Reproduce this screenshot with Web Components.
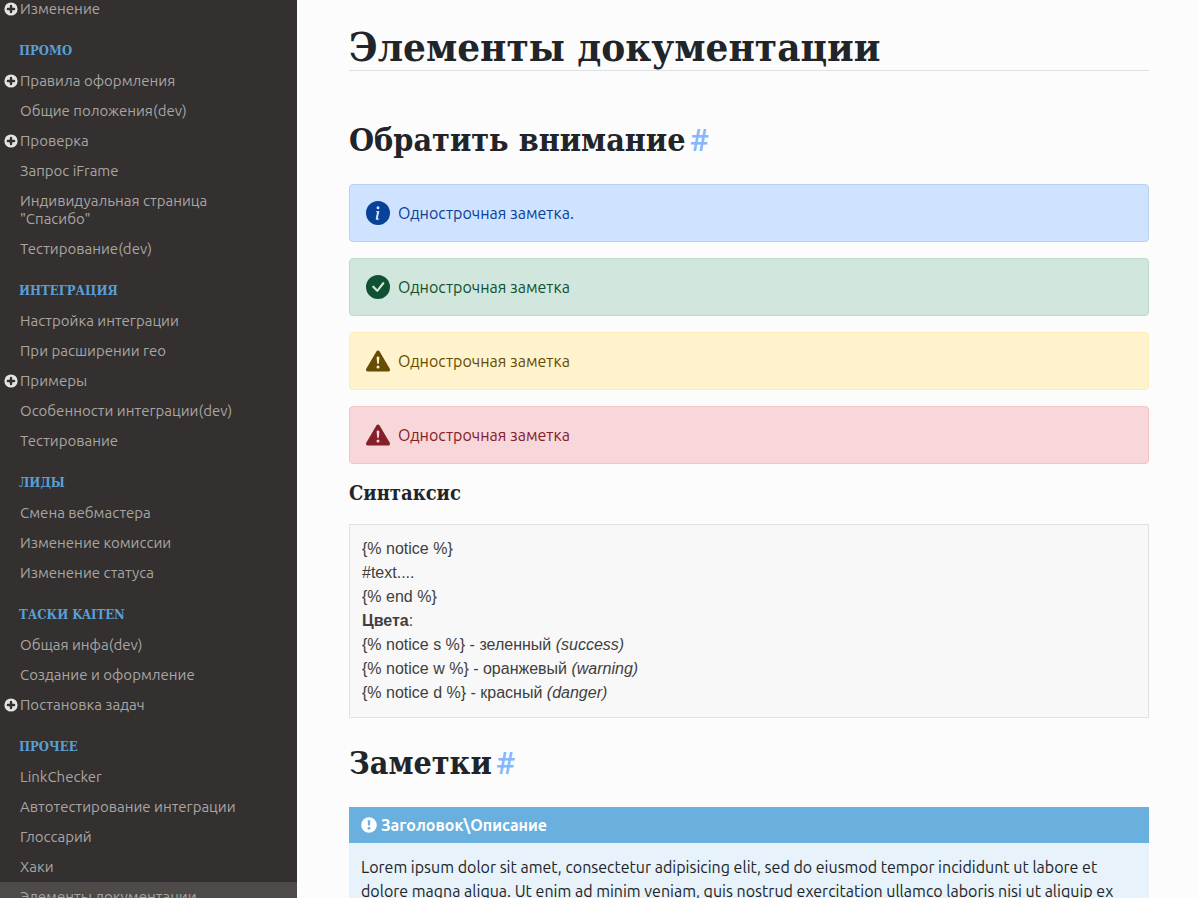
<!DOCTYPE html>
<html lang="ru">
<head>
<meta charset="utf-8">
<meta name="viewport" content="width=device-width, initial-scale=1">
<title>Элементы документации</title>
<style>
  :root {
    --sans: Ubuntu, "Noto Sans", sans-serif;
    --slab: "Roboto Slab", "DejaVu Serif Condensed", "DejaVu Serif", serif;
  }
  body { margin: 0; background: #fcfcfc; color: #212529; font: 16px/24px var(--sans); }
</style>
</head>
<body>
<docs-layout>
  <docs-sidebar slot="sidebar">
    <nav-item expandable>Изменение</nav-item>
    <nav-group heading="ПРОМО">
      <nav-item expandable>Правила оформления</nav-item>
      <nav-item>Общие положения(dev)</nav-item>
      <nav-item expandable>Проверка</nav-item>
      <nav-item>Запрос iFrame</nav-item>
      <nav-item>Индивидуальная страница "Спасибо"</nav-item>
      <nav-item>Тестирование(dev)</nav-item>
    </nav-group>
    <nav-group heading="ИНТЕГРАЦИЯ">
      <nav-item>Настройка интеграции</nav-item>
      <nav-item>При расширении гео</nav-item>
      <nav-item expandable>Примеры</nav-item>
      <nav-item>Особенности интеграции(dev)</nav-item>
      <nav-item>Тестирование</nav-item>
    </nav-group>
    <nav-group heading="ЛИДЫ">
      <nav-item>Смена вебмастера</nav-item>
      <nav-item>Изменение комиссии</nav-item>
      <nav-item>Изменение статуса</nav-item>
    </nav-group>
    <nav-group heading="ТАСКИ KAITEN">
      <nav-item>Общая инфа(dev)</nav-item>
      <nav-item>Создание и оформление</nav-item>
      <nav-item expandable>Постановка задач</nav-item>
    </nav-group>
    <nav-group heading="ПРОЧЕЕ">
      <nav-item>LinkChecker</nav-item>
      <nav-item>Автотестирование интеграции</nav-item>
      <nav-item>Глоссарий</nav-item>
      <nav-item>Хаки</nav-item>
      <nav-item active>Элементы документации</nav-item>
    </nav-group>
  </docs-sidebar>

  <page-title>Элементы документации</page-title>
  <section-title anchor="notice">Обратить внимание</section-title>
  <doc-notice>Однострочная заметка.</doc-notice>
  <doc-notice kind="success">Однострочная заметка</doc-notice>
  <doc-notice kind="warning">Однострочная заметка</doc-notice>
  <doc-notice kind="danger">Однострочная заметка</doc-notice>
  <sub-title>Синтаксис</sub-title>
  <syntax-box>
    <div>{% notice %}</div>
    <div>#text....</div>
    <div>{% end %}</div>
    <div><b>Цвета</b>:</div>
    <div>{% notice s %} - зеленный <i>(success)</i></div>
    <div>{% notice w %} - оранжевый <i>(warning)</i></div>
    <div>{% notice d %} - красный <i>(danger)</i></div>
  </syntax-box>
  <section-title anchor="notes">Заметки</section-title>
  <note-card heading="Заголовок\Описание">Lorem ipsum dolor sit amet, consectetur adipisicing elit, sed do eiusmod tempor incididunt ut labore et dolore magna aliqua. Ut enim ad minim veniam, quis nostrud exercitation ullamco laboris nisi ut aliquip ex ea commodo consequat.</note-card>
</docs-layout>

<script>
  const icons = {
    info: 'M8 16A8 8 0 1 0 8 0a8 8 0 0 0 0 16zm.93-9.412-1 4.705c-.07.34.029.533.304.533.194 0 .487-.07.686-.246l-.088.416c-.287.346-.92.598-1.465.598-.703 0-1.002-.422-.808-1.319l.738-3.468c.064-.293.006-.399-.287-.47l-.451-.081.082-.381 2.29-.287zM8 5.5a1 1 0 1 1 0-2 1 1 0 0 1 0 2z',
    success: 'M16 8A8 8 0 1 1 0 8a8 8 0 0 1 16 0zm-3.97-3.03a.75.75 0 0 0-1.08.022L7.477 9.417 5.384 7.323a.75.75 0 0 0-1.06 1.06L6.97 11.03a.75.75 0 0 0 1.079-.02l3.992-4.99a.75.75 0 0 0-.01-1.05z',
    warning: 'M8.982 1.566a1.13 1.13 0 0 0-1.96 0L.165 13.233c-.457.778.091 1.767.98 1.767h13.713c.889 0 1.438-.99.98-1.767L8.982 1.566zM8 5c.535 0 .954.462.9.995l-.35 3.507a.552.552 0 0 1-1.1 0L7.1 5.995A.905.905 0 0 1 8 5zm.002 6a1 1 0 1 1 0 2 1 1 0 0 1 0-2z'
  };
  icons.danger = icons.warning;

  class DocElement extends HTMLElement {
    connectedCallback() {
      if (this.shadowRoot) return;
      this.attachShadow({ mode: 'open' }).innerHTML = this.render();
    }
  }

  customElements.define('docs-layout', class extends DocElement {
    render() {
      return `<style>
        :host { display: flex; height: 100vh; overflow: hidden; }
        aside { flex: 0 0 297px; overflow: hidden; background: #33302f; }
        main { flex: 1; min-width: 0; overflow: hidden; padding: 24px 49px 24px 52px; }
      </style>
      <aside><slot name="sidebar"></slot></aside>
      <main><slot></slot></main>`;
    }
  });

  customElements.define('docs-sidebar', class extends DocElement {
    render() {
      return `<style>
        :host { display: block; }
        nav { margin-top: -6px; }
      </style>
      <nav><slot></slot></nav>`;
    }
  });

  customElements.define('nav-group', class extends DocElement {
    render() {
      return `<style>
        :host { display: block; }
        h6 { margin: 0; padding: 17px 19px 5px; font: bold 13px/20px var(--slab); color: #589fd6; }
      </style>
      <h6>${this.getAttribute('heading')}</h6>
      <slot></slot>`;
    }
  });

  customElements.define('nav-item', class extends DocElement {
    render() {
      const toggle = this.hasAttribute('expandable')
        ? `<button type="button" aria-label="Развернуть"><svg viewBox="0 0 14 14" width="14" height="14"><circle cx="7" cy="7" r="6.6" fill="#e4e4e4"/><path d="M7 3.9v6.2M3.9 7h6.2" stroke="#33302f" stroke-width="2.4" stroke-linecap="round"/></svg></button>`
        : '';
      return `<style>
        :host { display: grid; grid-template-columns: 16px 1fr; padding: 6px 56px 6px 4px; font-size: 15px; line-height: 18px; }
        :host([active]) { background: #4e4a4a; }
        button { display: flex; align-items: center; height: 18px; padding: 0; border: 0; background: none; }
        a { grid-column: 2; color: #a8a5a3; text-decoration: none; }
      </style>
      ${toggle}<a href="#"><slot></slot></a>`;
    }
  });

  customElements.define('page-title', class extends DocElement {
    render() {
      return `<style>
        :host { display: block; margin-bottom: 48px; }
        h1 { margin: 0; border-bottom: 1px solid #dee2e6; font: bold 40px/46px var(--slab); }
      </style>
      <h1><slot></slot></h1>`;
    }
  });

  customElements.define('section-title', class extends DocElement {
    render() {
      const id = this.getAttribute('anchor');
      return `<style>
        :host { display: block; margin: 24px 0 23px; }
        h2 { display: flex; gap: 4px; margin: 0; font: bold 32px/42px var(--slab); }
        a { color: #86b7fe; font-family: Roboto, sans-serif; font-weight: 500; text-decoration: none; }
      </style>
      <h2 id="${id}"><slot></slot><a href="#${id}">#</a></h2>`;
    }
  });

  customElements.define('sub-title', class extends DocElement {
    render() {
      return `<style>
        :host { display: block; margin-bottom: 18px; }
        h3 { margin: 0; font: bold 20px/26px var(--slab); }
      </style>
      <h3><slot></slot></h3>`;
    }
  });

  customElements.define('doc-notice', class extends DocElement {
    render() {
      const kind = this.getAttribute('kind') || 'info';
      return `<style>
        :host { display: flex; align-items: center; gap: 8px; margin-bottom: 16px; padding: 16px; border: 1px solid #b6d4ee; border-radius: 4px; background: #cfe2ff; color: #084298; }
        :host([kind=success]) { border-color: #badbcc; background: #d1e7dd; color: #0f5132; }
        :host([kind=warning]) { border-color: #ffecb5; background: #fff3cd; color: #664d03; }
        :host([kind=danger]) { border-color: #f5c2c7; background: #f8d7da; color: #842029; }
      </style>
      <svg viewBox="0 0 16 16" width="24" height="24" fill="currentColor" aria-hidden="true"><path d="${icons[kind]}"/></svg>
      <span><slot></slot></span>`;
    }
  });

  customElements.define('syntax-box', class extends DocElement {
    render() {
      return `<style>
        :host { display: block; padding: 12px; border: 1px solid #dee2e6; background: #f8f8f8; color: #404040; font-family: "Liberation Sans", Arial, sans-serif; }
      </style>
      <slot></slot>`;
    }
  });

  customElements.define('note-card', class extends DocElement {
    render() {
      return `<style>
        :host { display: block; background: #e7f2fa; }
        header { display: flex; align-items: center; gap: 4px; padding: 6px 12px; background: #6ab0de; color: #fff; font-weight: bold; }
        p { margin: 0; padding: 12px 20px 12px 12px; }
      </style>
      <header><svg viewBox="0 0 16 16" width="16" height="16" aria-hidden="true"><circle cx="8" cy="8" r="7.8" fill="#fff"/><path d="M6.7 3.2h2.6l-.3 5.4H7z" fill="#6ab0de"/><circle cx="8" cy="11.3" r="1.4" fill="#6ab0de"/></svg><span>${this.getAttribute('heading')}</span></header>
      <p><slot></slot></p>`;
    }
  });
</script>
</body>
</html>
